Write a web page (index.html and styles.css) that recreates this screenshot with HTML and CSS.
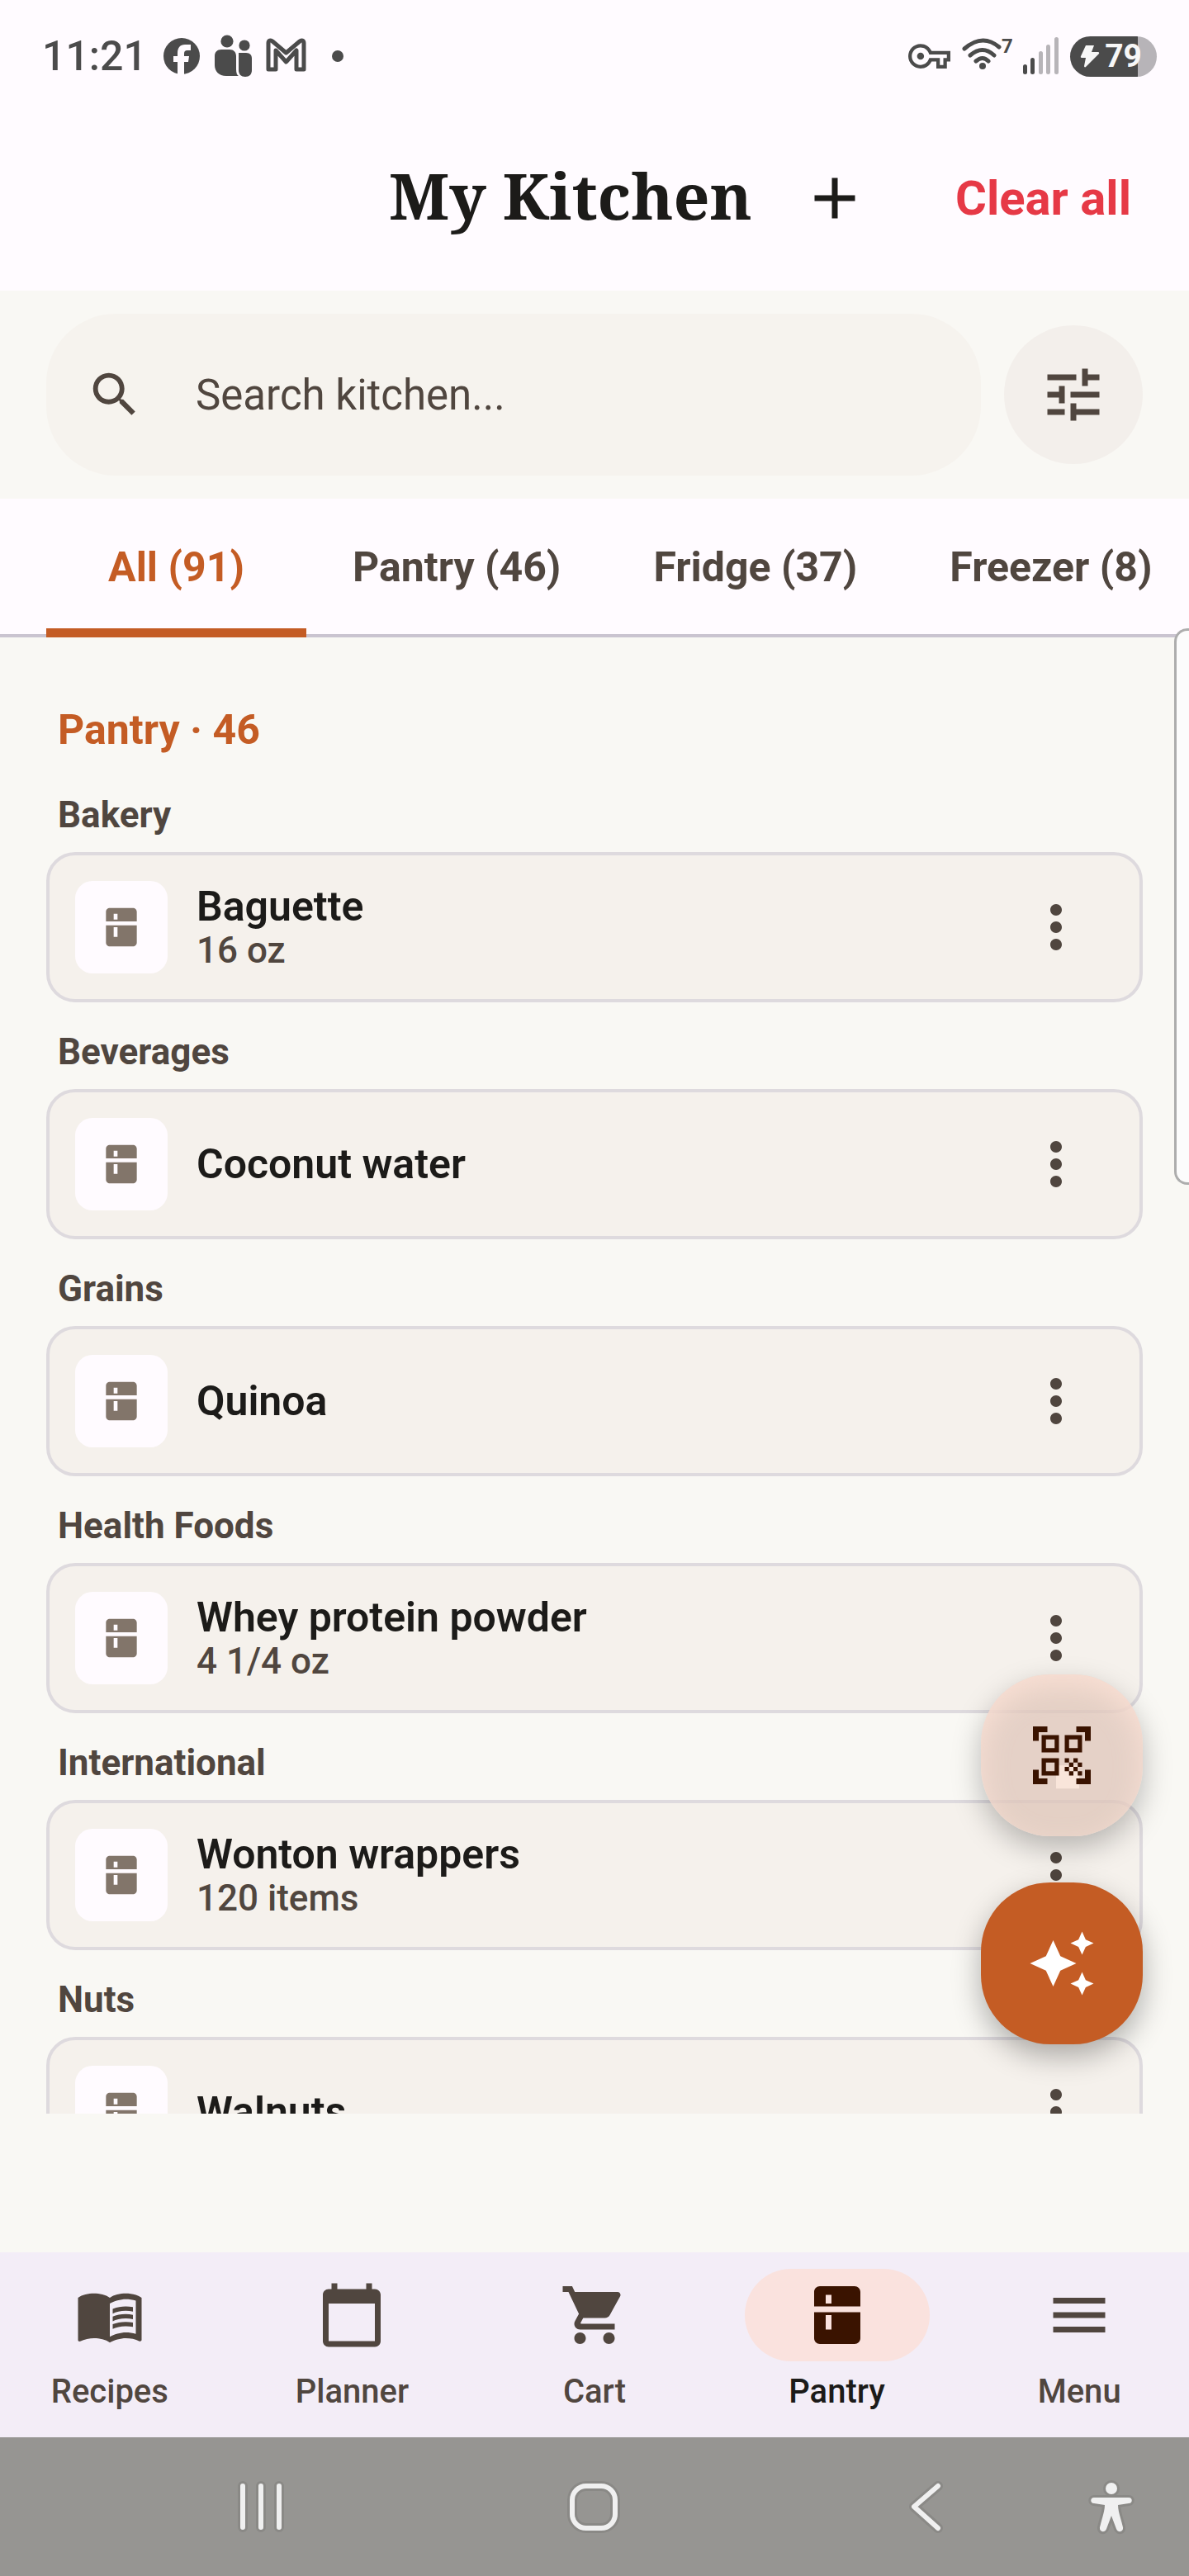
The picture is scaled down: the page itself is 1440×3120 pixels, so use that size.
FILE: index.html
```html
<!DOCTYPE html>
<html lang="en">
<head>
    <meta charset="UTF-8">
    <meta name="viewport" content="width=device-width, initial-scale=1.0">
    <title>My Kitchen</title>
    <link rel="stylesheet" href="styles.css">
</head>
<body>
    <!-- Shared icons -->
    <svg class="sprite" aria-hidden="true">
        <symbol id="fridge" viewBox="0 0 24 24">
            <path d="M20 9V4c0-1.1-.9-2-2-2H6c-1.1 0-2 .9-2 2v5h16zM8 5h2v3H8V5zM4 11v9c0 1.1.9 2 2 2h12c1.1 0 2-.9 2-2v-9H4zm6 6H8v-5h2v5z"/>
        </symbol>
        <symbol id="more" viewBox="0 0 24 24">
            <path d="M12 8c1.1 0 2-.9 2-2s-.9-2-2-2-2 .9-2 2 .9 2 2 2zm0 2c-1.1 0-2 .9-2 2s.9 2 2 2 2-.9 2-2-.9-2-2-2zm0 6c-1.1 0-2 .9-2 2s.9 2 2 2 2-.9 2-2-.9-2-2-2z"/>
        </symbol>
    </svg>

    <div class="screen">
        <div class="status-bar">
            <span class="clock">11:21</span>
            <svg width="46" height="52" viewBox="0 0 46 52">
                <circle cx="22" cy="26" r="22"/>
                <path class="cutout" d="M17 50V33h-5v-7h5v-4c0-6 3-10 9-10h7v7h-4c-3 0-4 1.500-4 4v3h6l-1 7h-5v17z"/>
            </svg>
            <svg width="46" height="52" viewBox="0 0 46 52">
                <circle cx="15" cy="8" r="7.600"/>
                <circle cx="36" cy="13" r="6.600"/>
                <path d="M8 18h10c5 0 8 3 8 8v16c0 4 1 7 3 8H14C5 50 0 44 0 37V26c0-5 3-8 8-8z"/>
                <path d="M29 22h9c5 0 7 3 7 7v14c0 5-3 8-8 8s-8-3-8-8z"/>
            </svg>
            <svg width="49" height="52" viewBox="0 0 49 52">
                <path class="line" d="M3 10v32h9V19l12.500 14L37 19v23h9V10c0-3-3-4-5-2L24.500 22 8 8C6 6 3 7 3 10z"/>
            </svg>
            <span class="status-dot"></span>

            <div class="status-right">
                <svg width="51" height="52" viewBox="0 0 24 24">
                    <path d="M22 19h-6v-4h-2.680c-1.140 2.420-3.600 4-6.320 4-3.860 0-7-3.140-7-7s3.140-7 7-7c2.720 0 5.170 1.580 6.320 4H24v6h-2v4zm-4-2h2v-4h2v-2H11.940l-.23-.67C11.010 8.340 9.110 7 7 7c-2.760 0-5 2.240-5 5s2.240 5 5 5c2.110 0 4.010-1.340 4.710-3.330l.23-.67H18v4z"/>
                    <circle cx="7" cy="12" r="2"/>
                </svg>
                <svg width="62" height="52" viewBox="0 0 62 52">
                    <path class="arc" d="M4 17q22-19 42-2M11 25q15-13 29 0M18 32q8-7 15 0"/>
                    <circle cx="26" cy="38" r="4"/>
                    <text x="49" y="22" class="wifi-gen">7</text>
                </svg>
                <svg width="44" height="52" viewBox="0 0 44 52">
                    <rect x="0" y="36" width="5" height="12" rx="2.500"/>
                    <rect x="9" y="28" width="5" height="20" rx="2.500"/>
                    <g class="dim">
                        <rect x="19" y="20" width="5" height="28" rx="2.500"/>
                        <rect x="28" y="12" width="5" height="36" rx="2.500"/>
                        <rect x="38" y="3" width="5" height="45" rx="2.500"/>
                    </g>
                </svg>
                <span class="battery">
                    <svg width="24" height="28" viewBox="0 0 24 28">
                        <path d="M7 1h10l-3 8h8c1 0 1.500 1 1 2L7 27c-1 1-2 0-2-1l2-10H2c-1 0-1.500-1-1-2z"/>
                    </svg>
                    79
                </span>
            </div>
        </div>

        <header class="top-bar">
            <h1>My Kitchen</h1>
            <button class="icon-btn" aria-label="Add item">
                <svg viewBox="0 0 24 24"><path d="M19 13h-6v6h-2v-6H5v-2h6V5h2v6h6v2z"/></svg>
            </button>
            <button class="clear-btn">Clear all</button>
        </header>

        <div class="search-row">
            <label class="search">
                <svg viewBox="0 0 24 24"><path d="M15.500 14h-.79l-.28-.27C15.410 12.590 16 11.110 16 9.500 16 5.910 13.090 3 9.500 3S3 5.910 3 9.500 5.910 16 9.500 16c1.610 0 3.090-.59 4.230-1.570l.27.28v.79l5 4.990L20.490 19l-4.990-5zm-6 0C7.010 14 5 11.990 5 9.500S7.010 5 9.500 5 14 7.010 14 9.500 11.990 14 9.500 14z"/></svg>
                <input type="text" placeholder="Search kitchen..." aria-label="Search kitchen">
            </label>
            <button class="filter-btn" aria-label="Filters">
                <svg viewBox="0 0 24 24"><path d="M3 17v2h6v-2H3zM3 5v2h10V5H3zm10 16v-2h8v-2h-8v-2h-2v6h2zM7 9v2H3v2h4v2h2V9H7zm14 4v-2H11v2h10zm-6-4h2V7h4V5h-4V3h-2v6z"/></svg>
            </button>
        </div>

        <div class="tabs" role="tablist">
            <button class="tab active" role="tab" aria-selected="true">All (91)</button>
            <button class="tab" role="tab">Pantry (46)</button>
            <button class="tab" role="tab">Fridge (37)</button>
            <button class="tab" role="tab">Freezer (8)</button>
        </div>

        <main class="list">
            <h2>Pantry · 46</h2>

            <h3>Bakery</h3>
            <div class="card">
                <div class="thumb"><svg><use href="#fridge"/></svg></div>
                <div class="info">
                    <div class="name">Baguette</div>
                    <div class="qty">16 oz</div>
                </div>
                <button class="more" aria-label="More options for Baguette"><svg><use href="#more"/></svg></button>
            </div>

            <h3>Beverages</h3>
            <div class="card">
                <div class="thumb"><svg><use href="#fridge"/></svg></div>
                <div class="info">
                    <div class="name">Coconut water</div>
                </div>
                <button class="more" aria-label="More options for Coconut water"><svg><use href="#more"/></svg></button>
            </div>

            <h3>Grains</h3>
            <div class="card">
                <div class="thumb"><svg><use href="#fridge"/></svg></div>
                <div class="info">
                    <div class="name">Quinoa</div>
                </div>
                <button class="more" aria-label="More options for Quinoa"><svg><use href="#more"/></svg></button>
            </div>

            <h3>Health Foods</h3>
            <div class="card">
                <div class="thumb"><svg><use href="#fridge"/></svg></div>
                <div class="info">
                    <div class="name">Whey protein powder</div>
                    <div class="qty">4 1/4 oz</div>
                </div>
                <button class="more" aria-label="More options for Whey protein powder"><svg><use href="#more"/></svg></button>
            </div>

            <h3>International</h3>
            <div class="card">
                <div class="thumb"><svg><use href="#fridge"/></svg></div>
                <div class="info">
                    <div class="name">Wonton wrappers</div>
                    <div class="qty">120 items</div>
                </div>
                <button class="more" aria-label="More options for Wonton wrappers"><svg><use href="#more"/></svg></button>
            </div>

            <h3>Nuts</h3>
            <div class="card">
                <div class="thumb"><svg><use href="#fridge"/></svg></div>
                <div class="info">
                    <div class="name">Walnuts</div>
                </div>
                <button class="more" aria-label="More options for Walnuts"><svg><use href="#more"/></svg></button>
            </div>
        </main>

        <nav class="bottom-nav">
            <a href="#recipes">
                <span class="pill"><svg viewBox="0 0 24 24">
                    <path d="M21 5c-1.110-.35-2.330-.5-3.500-.5-1.950 0-4.050.4-5.500 1.500-1.450-1.100-3.550-1.500-5.500-1.500S2.450 4.900 1 6v14.650c0 .25.25.5.5.5.1 0 .15-.05.25-.05C3.100 20.450 5.050 20 6.500 20c1.950 0 4.050.4 5.500 1.500 1.350-.85 3.800-1.500 5.500-1.500 1.650 0 3.350.3 4.750 1.050.1.05.15.05.25.05.25 0 .5-.25.5-.5V6c-.6-.45-1.250-.75-2-1zm0 13.500c-1.100-.35-2.300-.5-3.500-.5-1.700 0-4.150.65-5.500 1.500V8c1.350-.85 3.800-1.500 5.500-1.500 1.200 0 2.400.15 3.500.5v11.500z"/>
                    <path d="M17.500 10.500c.88 0 1.730.09 2.500.26V9.240c-.79-.15-1.640-.24-2.500-.24-1.700 0-3.240.29-4.500.83v1.660c1.130-.64 2.700-.99 4.500-.99zM13 12.490v1.660c1.130-.64 2.700-.99 4.500-.99.88 0 1.730.09 2.500.26V11.900c-.79-.15-1.640-.24-2.500-.24-1.700 0-3.240.3-4.500.83zM17.500 14.330c-1.700 0-3.240.29-4.500.83v1.660c1.130-.64 2.700-.99 4.500-.99.88 0 1.730.09 2.500.26v-1.520c-.79-.16-1.640-.24-2.500-.24z"/>
                </svg></span>
                Recipes
            </a>
            <a href="#planner">
                <span class="pill"><svg viewBox="0 0 24 24"><path d="M20 3h-1V1h-2v2H7V1H5v2H4c-1.100 0-2 .9-2 2v16c0 1.100.9 2 2 2h16c1.100 0 2-.9 2-2V5c0-1.100-.9-2-2-2zm0 18H4V8h16v13z"/></svg></span>
                Planner
            </a>
            <a href="#cart">
                <span class="pill"><svg viewBox="0 0 24 24"><path d="M7 18c-1.100 0-1.990.9-1.990 2S5.900 22 7 22s2-.9 2-2-.9-2-2-2zM1 2v2h2l3.600 7.590-1.350 2.450c-.16.28-.25.61-.25.96 0 1.100.9 2 2 2h12v-2H7.420c-.14 0-.25-.11-.25-.25l.03-.12.9-1.630h7.450c.75 0 1.410-.41 1.750-1.030l3.580-6.490c.08-.14.12-.31.12-.48 0-.55-.45-1-1-1H5.210l-.94-2H1zm16 16c-1.100 0-1.990.9-1.990 2s.89 2 1.990 2 2-.9 2-2-.9-2-2-2z"/></svg></span>
                Cart
            </a>
            <a href="#pantry" class="current" aria-current="page">
                <span class="pill"><svg><use href="#fridge"/></svg></span>
                Pantry
            </a>
            <a href="#menu">
                <span class="pill"><svg viewBox="0 0 24 24"><path d="M3 18h18v-2H3v2zm0-5h18v-2H3v2zm0-7v2h18V6H3z"/></svg></span>
                Menu
            </a>
        </nav>

        <div class="system-nav">
            <button aria-label="Recent apps">
                <svg width="64" height="72" viewBox="0 0 64 72">
                    <path class="halo" d="M10 11v50M32 11v50M54 11v50"/>
                    <path d="M10 11v50M32 11v50M54 11v50"/>
                </svg>
            </button>
            <button aria-label="Home">
                <svg width="72" height="72" viewBox="0 0 72 72">
                    <rect class="halo" x="10" y="11" width="52" height="51" rx="17"/>
                    <rect x="10" y="11" width="52" height="51" rx="17"/>
                </svg>
            </button>
            <button aria-label="Back">
                <svg width="48" height="72" viewBox="0 0 48 72">
                    <path class="halo" d="M38 11 9 36l29 26"/>
                    <path d="M38 11 9 36l29 26"/>
                </svg>
            </button>
            <button aria-label="Accessibility">
                <svg class="person" width="60" height="72" viewBox="0 0 60 72">
                    <circle cx="30" cy="14" r="7"/>
                    <path d="M9 25h42c5 0 5 7 0 7l-13 2c0 8 4 18 6 27 1 6-6 7-8 2l-6-16-6 16c-2 5-9 4-8-2 2-9 6-19 6-27L9 32c-5 0-5-7 0-7z"/>
                </svg>
            </button>
        </div>

        <div class="fabs">
            <button class="fab scan" aria-label="Scan code">
                <svg viewBox="0 0 24 24">
                    <path class="glint" d="M10 15.500h8v8h-8z"/>
                    <path d="M9.500 6.500v3h-3v-3h3M11 5H5v6h6V5zm-1.500 9.500v3h-3v-3h3M11 13H5v6h6v-6zm6.500-6.500v3h-3v-3h3M19 5h-6v6h6V5zm-6 8h1.500v1.500H13V13zm1.500 1.500H16V16h-1.500v-1.500zM16 13h1.500v1.500H16V13zm-3 3h1.500v1.500H13V16zm1.500 1.500H16V19h-1.500v-1.500zM16 16h1.500v1.500H16V16zm1.500-1.500H19V16h-1.500v-1.500zm0 3H19V19h-1.500v-1.500zM22 7h-2V4h-3V2h5v5zm0 15v-5h-2v3h-3v2h5zM2 22h5v-2H4v-3H2v5zM2 2v5h2V4h3V2H2z"/>
                </svg>
            </button>
            <button class="fab magic" aria-label="Suggest recipes">
                <svg viewBox="0 0 24 24"><path d="M19 9l1.250-2.750L23 5l-2.750-1.250L19 1l-1.250 2.750L15 5l2.750 1.250L19 9zm-7.500.5L9 4 6.500 9.500 1 12l5.500 2.500L9 20l2.500-5.500L17 12l-5.500-2.500zM19 15l-1.250 2.750L15 19l2.750 1.250L19 23l1.250-2.750L23 19l-2.750-1.250L19 15z"/></svg>
            </button>
        </div>

        <div class="edge-panel"></div>
    </div>
</body>
</html>
```

FILE: styles.css
```css
* {
    box-sizing: border-box;
}

body {
    margin: 0;
    background: #f9f8f4;
    color: #1c1b19;
    font-family: Roboto, sans-serif;
}

h1, h2, h3 {
    margin: 0;
}

button {
    padding: 0;
    border: 0;
    background: none;
    color: inherit;
    font-family: inherit;
    cursor: pointer;
}

svg {
    display: block;
    flex: none;
    fill: currentColor;
}

.sprite {
    position: absolute;
    width: 0;
    height: 0;
}

.screen {
    position: relative;
    display: flex;
    flex-direction: column;
    height: 100vh;
    overflow: hidden;
}

/* Status bar */
.status-bar {
    display: flex;
    align-items: center;
    gap: 16px;
    height: 128px;
    padding: 8px 39px 0 51px;
    background: #fffbff;
    color: #4b4b4b;
}

.clock {
    margin-right: 4px;
    font-size: 50px;
    font-weight: 500;
}

.cutout {
    fill: #fffbff;
}

.line {
    fill: none;
    stroke: currentColor;
    stroke-width: 5;
    stroke-linejoin: round;
}

.arc {
    fill: none;
    stroke: currentColor;
    stroke-width: 5;
    stroke-linecap: round;
}

.wifi-gen {
    font-size: 24px;
    font-weight: 700;
}

.dim {
    fill: #b7b4b8;
}

.status-dot {
    width: 14px;
    height: 14px;
    margin-left: 15px;
    border-radius: 50%;
    background: #4b4b4b;
}

.status-right {
    display: flex;
    align-items: center;
    gap: 13px;
    margin-left: auto;
}

.battery {
    display: flex;
    align-items: center;
    gap: 6px;
    height: 49px;
    padding: 0 18px 0 12px;
    border-radius: 25px;
    background: linear-gradient(to right, #4b4b4b 78%, #b7b4b8 78%);
    color: #f7f7f7;
    font-size: 39px;
    font-weight: 700;
}

/* Header */
.top-bar {
    display: flex;
    align-items: center;
    justify-content: flex-end;
    height: 224px;
    padding-right: 28px;
    background: #fffbff;
}

.top-bar h1 {
    padding-bottom: 8px;
    font-family: "Noto Serif", "Liberation Serif", serif;
    font-size: 77px;
    font-weight: 700;
}

.icon-btn {
    display: grid;
    place-items: center;
    width: 168px;
    height: 168px;
    margin-left: 16px;
}

.icon-btn svg {
    width: 84px;
    height: 84px;
}

.clear-btn {
    padding: 0 42px;
    margin-left: 20px;
    color: #e63946;
    font-size: 58px;
    font-weight: 700;
}

/* Search */
.search-row {
    display: flex;
    align-items: center;
    gap: 28px;
    padding: 28px 56px;
    color: #50463f;
}

.search {
    display: flex;
    flex: 1;
    align-items: center;
    height: 196px;
    padding: 0 48px;
    gap: 63px;
    border-radius: 84px;
    background: #f6f3ee;
}

.search svg {
    width: 70px;
    height: 70px;
}

.search input {
    flex: 1;
    min-width: 0;
    padding: 0;
    border: 0;
    outline: 0;
    background: none;
    color: inherit;
    font-family: inherit;
    font-size: 51px;
}

.search input::placeholder {
    color: #50463f;
    opacity: 1;
}

.filter-btn {
    display: grid;
    place-items: center;
    width: 168px;
    height: 168px;
    border-radius: 50%;
    background: #f3efeb;
}

.filter-btn svg {
    width: 84px;
    height: 84px;
}

/* Tabs */
.tabs {
    display: flex;
    flex: none;
    height: 168px;
    padding-left: 56px;
    overflow: hidden;
    background: #fffbff;
    box-shadow: inset 0 -4px #cac4d0;
    color: #50463f;
}

.tab {
    flex: none;
    min-width: 315px;
    padding: 0 56px 3px;
    font-size: 50px;
    font-weight: 700;
}

.tab.active {
    box-shadow: inset 0 -11px #c45c24;
    color: #c45c24;
}

/* Item list */
.list {
    flex: 1;
    min-height: 0;
    padding: 77px 56px 0;
    margin-bottom: 168px;
    overflow: hidden;
}

.list h2 {
    padding-left: 14px;
    margin-bottom: 40px;
    color: #c45c24;
    font-size: 50px;
    font-weight: 700;
    line-height: 70px;
}

.list h3 {
    padding-left: 14px;
    margin-bottom: 17px;
    color: #50463f;
    font-size: 44px;
    font-weight: 700;
    line-height: 56px;
}

.card {
    display: flex;
    align-items: center;
    gap: 35px;
    padding: 31px;
    margin-bottom: 32px;
    border: 4px solid #dedade;
    border-radius: 35px;
    background: #f5f1ec;
}

.thumb {
    display: grid;
    place-items: center;
    width: 112px;
    height: 112px;
    border-radius: 21px;
    background: #fffbff;
    color: #82756a;
}

.thumb svg {
    width: 56px;
    height: 56px;
}

.info {
    flex: 1;
}

.name {
    font-size: 50px;
    font-weight: 600;
    line-height: 56px;
}

.qty {
    color: #50463f;
    font-size: 44px;
    font-weight: 500;
    line-height: 50px;
}

.more {
    margin-right: 28px;
    color: #50463f;
}

.more svg {
    width: 84px;
    height: 84px;
}

/* Bottom navigation */
.bottom-nav {
    display: flex;
    gap: 28px;
    padding: 20px 0 27px;
    background: #f3edf7;
}

.bottom-nav a {
    display: flex;
    flex: 1;
    flex-direction: column;
    align-items: center;
    gap: 9px;
    color: #50463f;
    font-size: 40px;
    font-weight: 500;
    line-height: 56px;
    text-decoration: none;
}

.pill {
    display: grid;
    place-items: center;
    width: 224px;
    height: 112px;
    border-radius: 56px;
}

.pill svg {
    width: 84px;
    height: 84px;
}

.bottom-nav .current {
    color: #1c1b19;
}

.current .pill {
    background: #fae2de;
    color: #3a1300;
}

.system-nav {
    display: grid;
    grid-template-columns: 9fr 9fr 9fr minmax(0, 1fr);
    place-items: center;
    height: 168px;
    padding: 0 72px 0 114px;
    background: #969592;
}

.system-nav svg {
    fill: none;
    stroke: #f0f0f0;
    stroke-width: 6;
    stroke-linecap: round;
    stroke-linejoin: round;
}

.system-nav .halo {
    stroke: #8a8986;
    stroke-width: 12;
}

.system-nav .person {
    fill: #f0f0f0;
    stroke: #8a8986;
    stroke-width: 6;
    paint-order: stroke;
}

/* Floating buttons */
.fabs {
    position: absolute;
    right: 56px;
    bottom: 644px;
    display: flex;
    flex-direction: column;
    gap: 56px;
}

.fab {
    display: grid;
    place-items: center;
    width: 196px;
    height: 196px;
    border-radius: 84px;
}

.fab svg {
    width: 84px;
    height: 84px;
}

.scan {
    background: rgba(222, 196, 184, 0.75);
    box-shadow: 0 14px 35px rgba(0, 0, 0, 0.25), inset 0 14px 35px rgba(255, 228, 216, 0.8);
    color: #3a1300;
}

.glint {
    fill: #f9e5da;
}

.magic {
    background: #c45c24;
    box-shadow: 0 14px 35px rgba(0, 0, 0, 0.3);
    color: #fff;
}

/* Handle of the side panel */
.edge-panel {
    position: absolute;
    top: 761px;
    right: 0;
    width: 18px;
    height: 674px;
    border: 3px solid #adadad;
    border-right: 0;
    border-radius: 16px 0 0 16px;
    background: #fcfcfc;
}
```
